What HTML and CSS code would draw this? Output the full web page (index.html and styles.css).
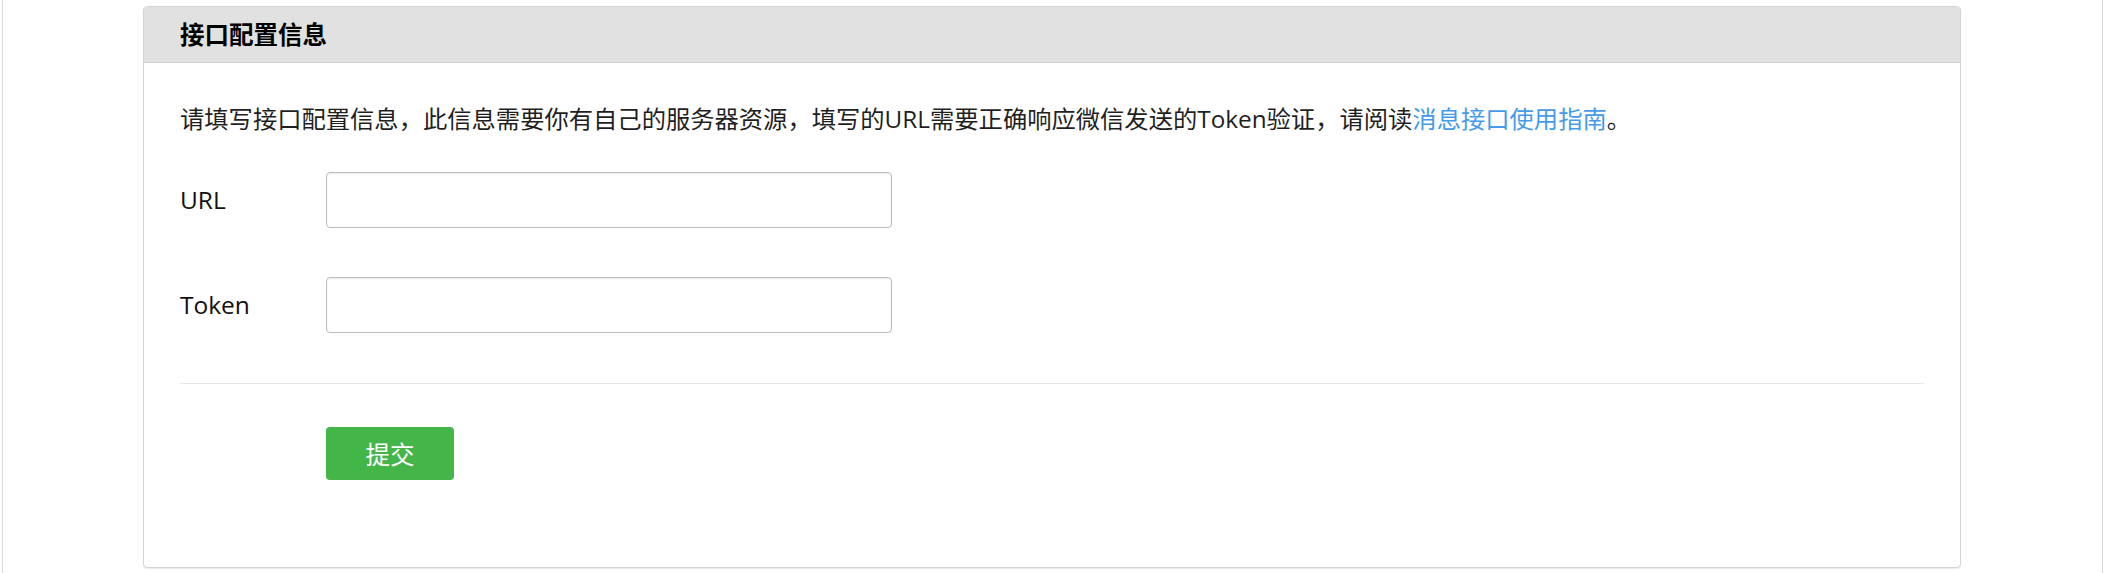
FILE: index.html
```html
<!DOCTYPE html>
<html lang="zh-CN">
<head>
<meta charset="utf-8">
<title>接口配置信息</title>
<link rel="stylesheet" href="styles.css">
</head>
<body>
<div class="page">
  <div class="card">
    <div class="card-header">接口配置信息</div>
    <div class="card-body">
      <p class="desc">请填写接口配置信息，此信息需要你有自己的服务器资源，填写的URL需要正确响应微信发送的Token验证，请阅读<a class="link" href="#">消息接口使用指南</a>。</p>
      <div class="form-row">
        <label class="form-label">URL</label>
        <input class="form-input" type="text">
      </div>
      <div class="form-row">
        <label class="form-label">Token</label>
        <input class="form-input" type="text">
      </div>
      <div class="divider"></div>
      <div class="actions">
        <button class="btn-submit" type="button">提交</button>
      </div>
    </div>
  </div>
</div>
</body>
</html>
```
FILE: styles.css
```css
html, body {
  margin: 0;
  padding: 0;
  background: #fff;
}
body {
  font-family: "Open Sans", "Noto Sans CJK SC", sans-serif;
  font-size: 24.5px;
  color: #222;
}
.page {
  box-sizing: border-box;
  margin-left: 2px;
  width: 2101px;
  min-height: 573px;
  border-left: 1px solid #d9d9d9;
  border-right: 1px solid #d9d9d9;
  padding: 6px 141px 0 140px;
}
.card {
  border: 1px solid #d4d4d4;
  border-radius: 4px;
  box-shadow: 0 1px 1px rgba(0, 0, 0, 0.08);
  background: #fff;
  overflow: hidden;
}
.card-header {
  height: 55px;
  line-height: 55px;
  padding-left: 36px;
  background: #e1e1e1;
  border-bottom: 1px solid #cfcfcf;
  font-weight: bold;
  color: #000;
}
.card-body {
  padding: 37px 36px 87px 36px;
}
.desc {
  margin: 0;
  font-size: 24.3px;
  line-height: 37px;
  color: #1f1f1f;
}
.link {
  color: #459ae9;
  text-decoration: none;
}
.form-row {
  display: flex;
  align-items: center;
  margin-top: 35px;
}
.form-row + .form-row {
  margin-top: 49px;
}
.form-label {
  width: 146px;
  color: #111;
  line-height: 36px;
}
.form-input {
  box-sizing: border-box;
  width: 566px;
  height: 56px;
  border: 1px solid #bdbdbd;
  border-radius: 4px;
  box-shadow: inset 0 1px 2px rgba(0, 0, 0, 0.08);
  background: #fff;
  font: inherit;
  padding: 0 10px;
  margin: 0;
}
.divider {
  height: 1px;
  background: #e6e6e6;
  margin-top: 50px;
}
.actions {
  display: flex;
  padding-left: 146px;
  margin-top: 43px;
}
.btn-submit {
  width: 128px;
  height: 53px;
  border: none;
  border-radius: 4px;
  background: #44b549;
  color: #fff;
  font-family: "Open Sans", "Noto Sans CJK SC", sans-serif;
  font-size: 24.5px;
  padding: 0;
  cursor: pointer;
}
```
